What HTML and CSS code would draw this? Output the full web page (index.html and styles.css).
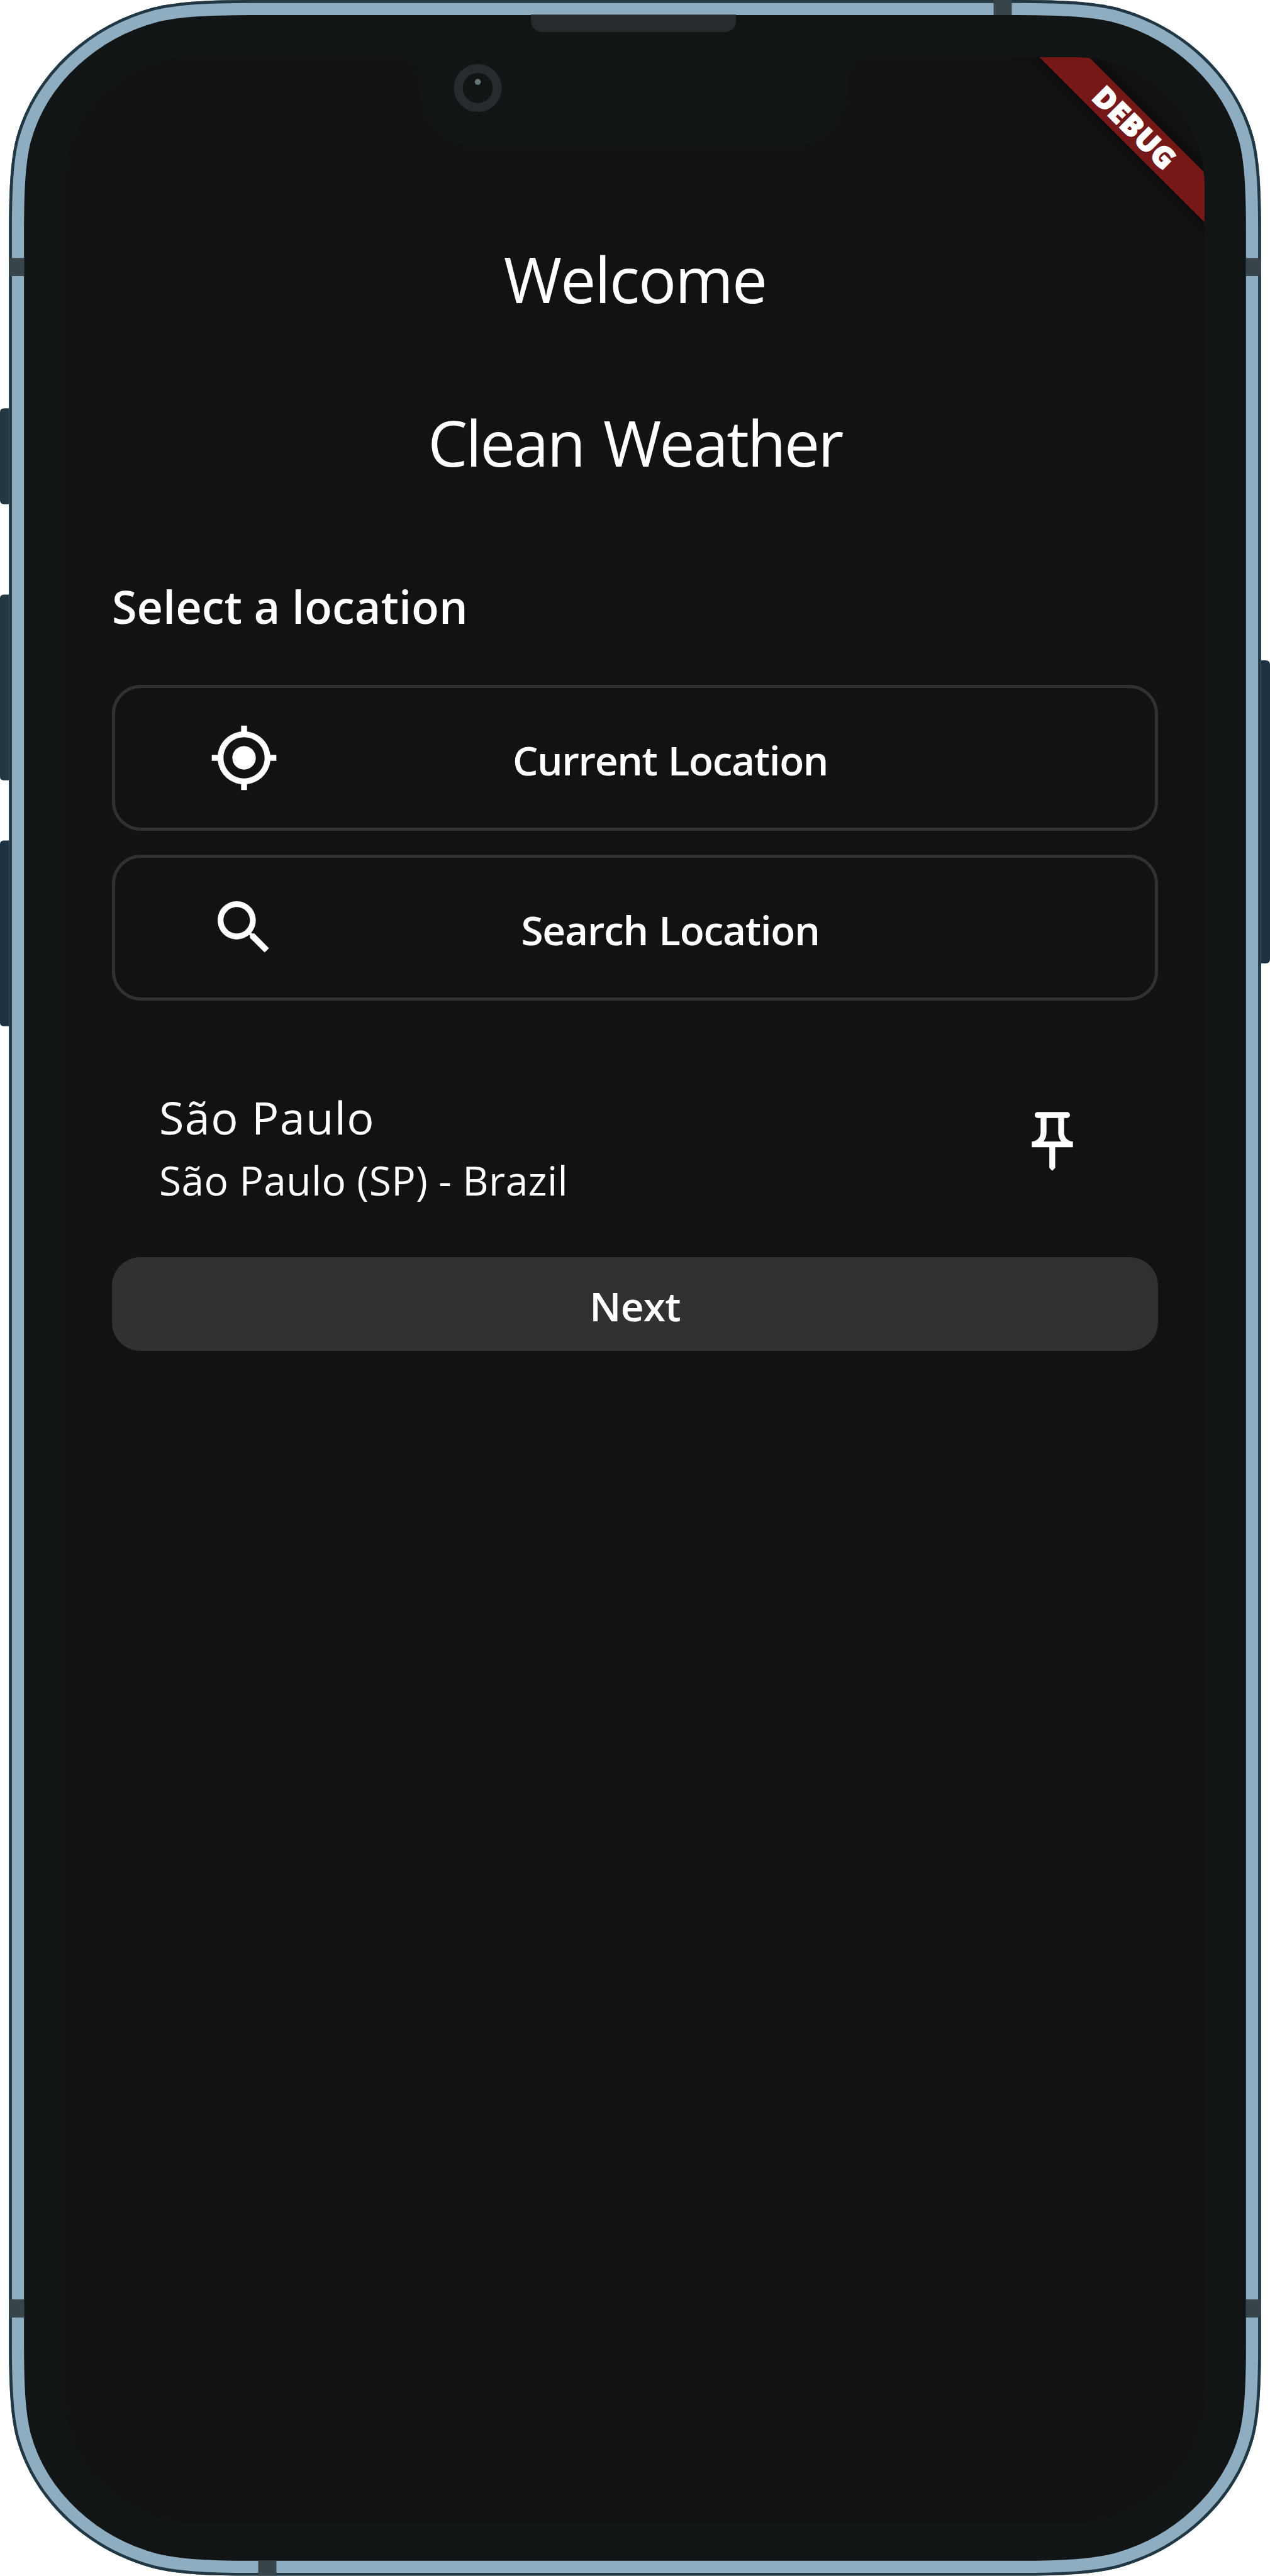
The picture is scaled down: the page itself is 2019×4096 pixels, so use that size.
FILE: index.html
```html
<!DOCTYPE html>
<html lang="en">
<head>
<meta charset="utf-8">
<title>Clean Weather</title>
<link rel="stylesheet" href="styles.css">
</head>
<body>
<div class="phone">
  <svg class="frame" viewBox="0 0 2619 5313" preserveAspectRatio="none" aria-hidden="true">
    <defs>
      <path id="shell" d="M18.5 480C18.5 385 22 330 33 286C70 150 185 50 318 15C365 4 420 0 520 0H2099C2199 0 2254 4 2301 15C2434 50 2549 150 2586 286C2597 330 2600.5 385 2600.5 480V4832.5C2600.5 4927.500 2597 4982.500 2586 5026.500C2549 5162.500 2434 5262.500 2301 5297.500C2254 5308.500 2199 5312.500 2099 5312.500H520C420 5312.500 365 5308.500 318 5297.500C185 5262.500 70 5162.500 33 5026.500C22 4982.500 18.500 4927.500 18.500 4832.500Z"/>
      <clipPath id="shell-clip"><use href="#shell"/></clipPath>
    </defs>
    <!-- side buttons -->
    <path fill="#213744" d="M19 842H9Q0 842 0 850V1032Q0 1040 9 1040H19zM19 1226.500H9Q0 1226.500 0 1234V1602Q0 1609.500 9 1609.500H19z"/>
    <path fill="#1d3344" d="M19 1733.500H9Q0 1733.500 0 1741V2109Q0 2116.500 9 2116.500H19zM2600 1362H2610Q2619 1362 2619 1371V1978Q2619 1987 2610 1987H2600z"/>
    <!-- shell and metal band -->
    <g clip-path="url(#shell-clip)">
      <use href="#shell" fill="#111515" stroke="#8fadc1" stroke-width="62"/>
      <use href="#shell" fill="none" stroke="#213744" stroke-width="12"/>
      <path fill="#37444a" d="M18 532h31.500v37.500H18zM18 4742.500h31.500v37.500H18zM2569.500 532H2601v37.500h-31.500zM2569.500 4742.500H2601v37.500h-31.500zM2049 0h37.500v31H2049zM532.500 5281.500H570V5313h-37.500z"/>
    </g>
    <!-- display with notch -->
    <path fill="#121212" d="M402 118H825Q861 118 861 175A135 133 0 0 0 996 308H1617A135 133 0 0 0 1752 175Q1752 118 1788 118H2217A267 267 0 0 1 2484 385V4934A267 267 0 0 1 2217 5201H402A267 267 0 0 1 135 4934V385A267 267 0 0 1 402 118Z"/>
    <path fill="#262b2d" d="M1095 30H1518V43A23 23 0 0 1 1495 66H1118A23 23 0 0 1 1095 43Z"/>
    <circle cx="985.300" cy="181.500" r="49.500" fill="#262b2d"/>
    <circle cx="985.300" cy="181.500" r="31" fill="#111515"/>
    <circle cx="985.300" cy="169" r="6.200" fill="#66757a"/>
  </svg>

  <main class="screen">
    <h1 class="title">Welcome</h1>
    <h1 class="title title-app">Clean Weather</h1>
    <h2 class="subtitle">Select a location</h2>
    <div class="options">
      <button class="option">
        <svg class="icon" viewBox="0 0 24 24"><path d="M12 8c-2.210 0-4 1.790-4 4s1.790 4 4 4 4-1.790 4-4-1.790-4-4-4zm8.940 3c-.46-4.170-3.770-7.480-7.940-7.940V1h-2v2.060C6.830 3.520 3.520 6.830 3.060 11H1v2h2.060c.46 4.170 3.770 7.480 7.940 7.940V23h2v-2.060c4.170-.46 7.480-3.770 7.940-7.940H23v-2h-2.060zM12 19c-3.870 0-7-3.130-7-7s3.130-7 7-7 7 3.130 7 7-3.130 7-7 7z"/></svg>
        <span class="label label-current">Current Location</span>
      </button>
      <button class="option">
        <svg class="icon" viewBox="0 0 24 24"><path d="M15.500 14h-.79l-.28-.27C15.410 12.590 16 11.110 16 9.500 16 5.910 13.090 3 9.500 3S3 5.910 3 9.500 5.910 16 9.500 16c1.610 0 3.090-.59 4.230-1.570l.27.28v.79l5 4.990L20.490 19l-4.990-5zm-6 0C7.010 14 5 11.990 5 9.500S7.010 5 9.500 5 14 7.010 14 9.500 11.990 14 9.500 14z"/></svg>
        <span class="label">Search Location</span>
      </button>
    </div>
    <div class="place">
      <div class="place-text">
        <div class="place-name">São Paulo</div>
        <div class="place-region">São Paulo (SP) - Brazil</div>
      </div>
      <svg class="icon pin" viewBox="0 0 24 24"><path d="M14 4v5c0 1.120.37 2.160 1 3H9c.65-.86 1-1.900 1-3V4h4m3-2H7c-.55 0-1 .45-1 1s.45 1 1 1h1v5c0 1.660-1.340 3-3 3v2h5.970v7l1 1 1-1v-7H19v-2c-1.660 0-3-1.340-3-3V4h1c.55 0 1-.45 1-1s-.45-1-1-1z"/></svg>
    </div>
    <button class="next">Next</button>
    <div class="banner">DEBUG</div>
  </main>
</div>
</body>
</html>
```
FILE: styles.css
```css
* { box-sizing: border-box; }

body {
  margin: 0;
  background: #fff;
  color: #fff;
  font-family: "Open Sans", "Noto Sans", sans-serif;
}

.phone {
  position: relative;
  width: 2019px;
  height: 4096px;
  padding: 91px 104px 86px;
  overflow: hidden;
}

.frame {
  position: absolute;
  inset: 0;
  width: 100%;
  height: 100%;
}

.screen {
  position: relative;
  display: flex;
  flex-direction: column;
  height: 3919px;
  padding: 284px 74px 0;
  border-radius: 206px;
  overflow: hidden;
}

.title {
  margin: 0;
  font-size: 100px;
  font-weight: 400;
  line-height: 137px;
  letter-spacing: -1.85px;
  text-align: center;
}

.title-app {
  margin-top: 123px;
  letter-spacing: -2.6px;
  word-spacing: 7px;
}

.subtitle {
  margin: 143px 0 0;
  font-size: 72px;
  font-weight: 600;
  line-height: 98px;
}

.options {
  display: flex;
  flex-direction: column;
  gap: 38px;
  margin-top: 76px;
}

.option {
  display: flex;
  align-items: center;
  height: 232px;
  padding: 0 149px;
  border: 5px solid #313131;
  border-radius: 46px;
  background: none;
  color: inherit;
  font-family: inherit;
}

.icon {
  flex: none;
  width: 112px;
  height: 112px;
  fill: #fff;
}

.label {
  flex: 1;
  padding-top: 6px;
  font-size: 64px;
  font-weight: 600;
  line-height: 87px;
  letter-spacing: -1.3px;
  word-spacing: 2px;
  text-align: center;
}

.label-current { letter-spacing: -1.4px; }

.place {
  display: flex;
  align-items: center;
  justify-content: space-between;
  margin-top: 136px;
  padding: 0 112px 0 75px;
}

.place-name {
  font-size: 72px;
  line-height: 98px;
  letter-spacing: 1.39px;
}

.place-region {
  margin-top: 8px;
  font-size: 64px;
  line-height: 87px;
  letter-spacing: 0.4px;
}

.pin { margin-bottom: 18px; }

.next {
  height: 149px;
  margin-top: 79px;
  padding: 6px 0 0;
  border: 0;
  border-radius: 45px;
  background: #313131;
  color: inherit;
  font-family: inherit;
  font-size: 64px;
  font-weight: 600;
  line-height: 87px;
  letter-spacing: -0.8px;
}

/* ribbon laid over the top right corner of the display */
.banner {
  position: absolute;
  top: 83px;
  left: 1349px;
  width: 700px;
  height: 56px;
  padding-left: 3px;
  background: #761718;
  box-shadow: 0 0 28px rgba(0, 0, 0, 0.5);
  font-size: 46.5px;
  font-weight: 800;
  line-height: 54px;
  letter-spacing: 0.8px;
  text-align: center;
  -webkit-text-stroke: 1.5px #fff;
  transform: rotate(45deg);
}
```
